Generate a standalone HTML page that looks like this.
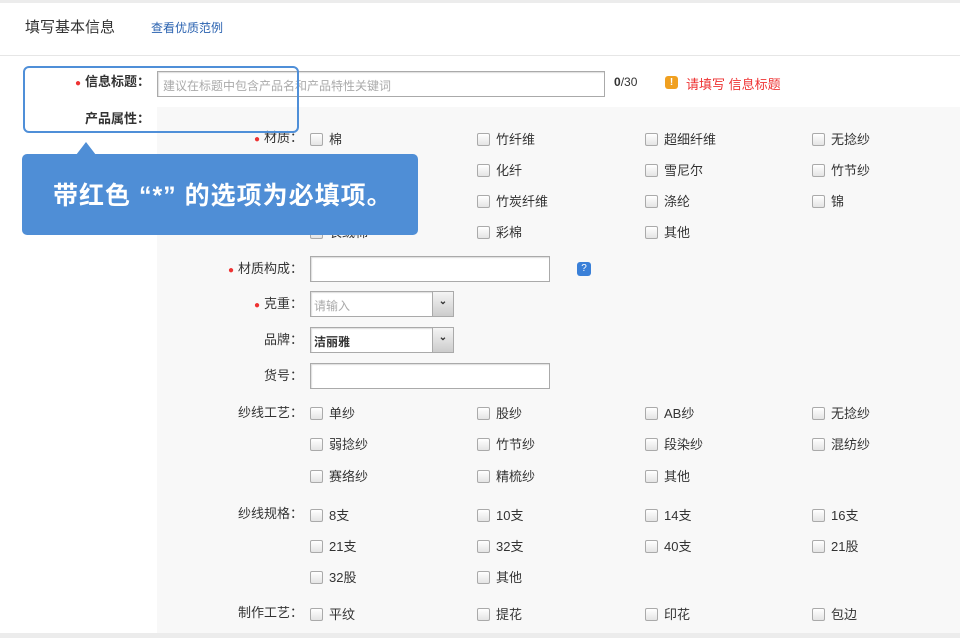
<!DOCTYPE html>
<html><head><meta charset="utf-8"><style>
body{margin:0;width:960px;height:638px;overflow:hidden;background:#fff;font-family:"Liberation Sans","Noto Sans CJK SC",sans-serif;font-size:13px;color:#333;position:relative}
.a{position:absolute;white-space:nowrap}
.cb{position:absolute;width:11px;height:11px;border:1px solid #aaa;border-radius:2px;background:linear-gradient(#fff,#e4e4e4)}
.lbl{position:absolute;width:150px;text-align:right;white-space:nowrap;font-size:13px;line-height:16px;margin-top:-1px}
.r{color:#e33;font-size:10px;margin-right:4px}
.inp{position:absolute;border:1px solid #aaa;background:#fff;box-shadow:inset 1px 1px 1px #ddd}
.sel{position:absolute;width:20px;right:0;top:0;bottom:0;background:linear-gradient(#f4f4f4,#ccc);border-left:1px solid #aaa;text-align:center;font-size:10px;line-height:20px;font-weight:bold}
.c div.a{margin-top:-2px}
</style></head><body>
<div class="a" style="left:0;top:0;width:960px;height:3px;background:#ececec"></div>
<div class="a" style="left:25px;top:16px;font-size:15px;color:#333">填写基本信息</div>
<div class="a" style="left:151px;top:19px;font-size:12px;color:#2a62b0">查看优质范例</div>
<div class="a" style="left:0;top:55px;width:960px;height:1px;background:#e6e6e6"></div>
<div class="a" style="left:157px;top:107px;width:803px;height:527px;background:#f8f8f8"></div>
<div class="a" style="left:0;top:633px;width:960px;height:5px;background:#ececec"></div>

<div class="lbl" style="left:0;top:75px;font-weight:bold"><span class="r">●</span>信息标题：</div>
<div class="inp" style="left:157px;top:71px;width:446px;height:24px"><span class="a" style="left:5px;top:5px;color:#aaa;font-size:12px">建议在标题中包含产品名和产品特性关键词</span></div>
<div class="a" style="left:614px;top:75px;font-size:12px"><b>0</b>/30</div>
<div class="a" style="left:665px;top:76px;width:13px;height:13px;background:#f0a020;border-radius:3px;color:#fff;font-size:10px;text-align:center;line-height:13px;font-weight:bold">!</div>
<div class="a" style="left:686px;top:74px;color:#e33;font-size:13px">请填写 信息标题</div>
<div class="lbl" style="left:0;top:112px;font-weight:bold">产品属性：</div>

<div class="c">
<div class="lbl" style="left:153px;top:131px"><span class="r">●</span>材质：</div>
<div class="cb" style="left:310px;top:133px"></div><div class="a" style="left:329px;top:131px">棉</div>
<div class="cb" style="left:477px;top:133px"></div><div class="a" style="left:496px;top:131px">竹纤维</div>
<div class="cb" style="left:645px;top:133px"></div><div class="a" style="left:664px;top:131px">超细纤维</div>
<div class="cb" style="left:812px;top:133px"></div><div class="a" style="left:831px;top:131px">无捻纱</div>
<div class="cb" style="left:477px;top:164px"></div><div class="a" style="left:496px;top:162px">化纤</div>
<div class="cb" style="left:645px;top:164px"></div><div class="a" style="left:664px;top:162px">雪尼尔</div>
<div class="cb" style="left:812px;top:164px"></div><div class="a" style="left:831px;top:162px">竹节纱</div>
<div class="cb" style="left:477px;top:195px"></div><div class="a" style="left:496px;top:193px">竹炭纤维</div>
<div class="cb" style="left:645px;top:195px"></div><div class="a" style="left:664px;top:193px">涤纶</div>
<div class="cb" style="left:812px;top:195px"></div><div class="a" style="left:831px;top:193px">锦</div>
<div class="cb" style="left:310px;top:226px"></div><div class="a" style="left:329px;top:224px">长绒棉</div>
<div class="cb" style="left:477px;top:226px"></div><div class="a" style="left:496px;top:224px">彩棉</div>
<div class="cb" style="left:645px;top:226px"></div><div class="a" style="left:664px;top:224px">其他</div>

<div class="lbl" style="left:153px;top:262px"><span class="r">●</span>材质构成：</div>
<div class="inp" style="left:310px;top:256px;width:238px;height:24px"></div>
<div class="a" style="left:577px;top:262px;width:14px;height:14px;background:#3a80d8;border-radius:3px;color:#fff;font-size:10px;text-align:center;line-height:14px;margin-top:0">?</div>
<div class="lbl" style="left:153px;top:297px"><span class="r">●</span>克重：</div>
<div class="inp" style="left:310px;top:291px;width:142px;height:24px"><span class="a" style="left:3px;top:5px;color:#aaa;font-size:12px">请输入</span><div class="sel">⌄</div></div>
<div class="lbl" style="left:153px;top:333px">品牌：</div>
<div class="inp" style="left:310px;top:327px;width:142px;height:24px"><span class="a" style="left:3px;top:5px;font-weight:bold;font-size:12px">洁丽雅</span><div class="sel">⌄</div></div>
<div class="lbl" style="left:153px;top:369px">货号：</div>
<div class="inp" style="left:310px;top:363px;width:238px;height:24px"></div>

<div class="lbl" style="left:153px;top:406px">纱线工艺：</div>
<div class="cb" style="left:310px;top:407px"></div><div class="a" style="left:329px;top:405px">单纱</div>
<div class="cb" style="left:477px;top:407px"></div><div class="a" style="left:496px;top:405px">股纱</div>
<div class="cb" style="left:645px;top:407px"></div><div class="a" style="left:664px;top:405px">AB纱</div>
<div class="cb" style="left:812px;top:407px"></div><div class="a" style="left:831px;top:405px">无捻纱</div>
<div class="cb" style="left:310px;top:438px"></div><div class="a" style="left:329px;top:436px">弱捻纱</div>
<div class="cb" style="left:477px;top:438px"></div><div class="a" style="left:496px;top:436px">竹节纱</div>
<div class="cb" style="left:645px;top:438px"></div><div class="a" style="left:664px;top:436px">段染纱</div>
<div class="cb" style="left:812px;top:438px"></div><div class="a" style="left:831px;top:436px">混纺纱</div>
<div class="cb" style="left:310px;top:470px"></div><div class="a" style="left:329px;top:468px">赛络纱</div>
<div class="cb" style="left:477px;top:470px"></div><div class="a" style="left:496px;top:468px">精梳纱</div>
<div class="cb" style="left:645px;top:470px"></div><div class="a" style="left:664px;top:468px">其他</div>

<div class="lbl" style="left:153px;top:507px">纱线规格：</div>
<div class="cb" style="left:310px;top:509px"></div><div class="a" style="left:329px;top:507px">8支</div>
<div class="cb" style="left:477px;top:509px"></div><div class="a" style="left:496px;top:507px">10支</div>
<div class="cb" style="left:645px;top:509px"></div><div class="a" style="left:664px;top:507px">14支</div>
<div class="cb" style="left:812px;top:509px"></div><div class="a" style="left:831px;top:507px">16支</div>
<div class="cb" style="left:310px;top:540px"></div><div class="a" style="left:329px;top:538px">21支</div>
<div class="cb" style="left:477px;top:540px"></div><div class="a" style="left:496px;top:538px">32支</div>
<div class="cb" style="left:645px;top:540px"></div><div class="a" style="left:664px;top:538px">40支</div>
<div class="cb" style="left:812px;top:540px"></div><div class="a" style="left:831px;top:538px">21股</div>
<div class="cb" style="left:310px;top:571px"></div><div class="a" style="left:329px;top:569px">32股</div>
<div class="cb" style="left:477px;top:571px"></div><div class="a" style="left:496px;top:569px">其他</div>

<div class="lbl" style="left:153px;top:606px">制作工艺：</div>
<div class="cb" style="left:310px;top:608px"></div><div class="a" style="left:329px;top:606px">平纹</div>
<div class="cb" style="left:477px;top:608px"></div><div class="a" style="left:496px;top:606px">提花</div>
<div class="cb" style="left:645px;top:608px"></div><div class="a" style="left:664px;top:606px">印花</div>
<div class="cb" style="left:812px;top:608px"></div><div class="a" style="left:831px;top:606px">包边</div>
</div>

<div class="a" style="left:23px;top:66px;width:272px;height:63px;border:2px solid #4f8fd8;border-radius:6px"></div>
<div class="a" style="left:22px;top:154px;width:396px;height:81px;background:#4f8ed6;border-radius:5px"></div>
<div class="a" style="left:76px;top:142px;width:0;height:0;border-left:10px solid transparent;border-right:10px solid transparent;border-bottom:13px solid #4f8ed6"></div>
<div class="a" style="left:53px;top:180px;color:#fff;font-size:25px;line-height:32px;font-weight:bold;letter-spacing:1px">带红色 “*” 的选项为必填项。</div>
</body></html>
